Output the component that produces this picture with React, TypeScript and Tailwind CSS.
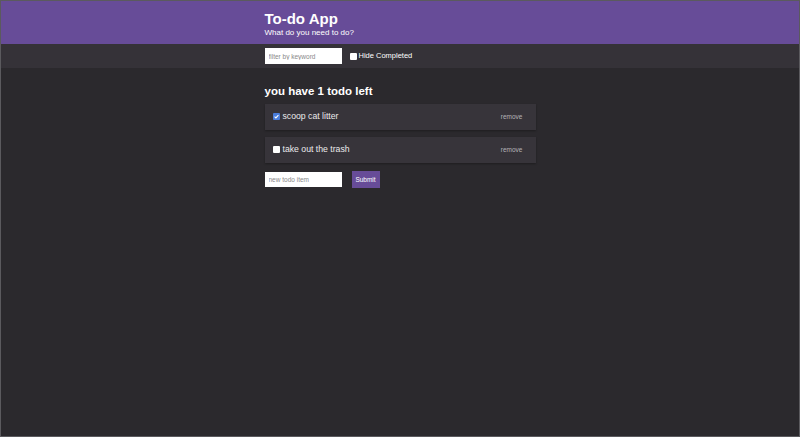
import { useState } from 'react';

type Todo = { id: number; text: string; done: boolean };

function Box({ checked, onChange }: { checked: boolean; onChange?: () => void }) {
  return (
    <span className="relative inline-flex size-[7px] shrink-0">
      <input
        type="checkbox"
        checked={checked}
        onChange={onChange}
        className="m-0 size-[7px] appearance-none rounded-[1px] bg-white checked:bg-[#4a7ddb]"
      />
      {checked && (
        <svg viewBox="0 0 8 8" className="pointer-events-none absolute inset-0 size-[7px]">
          <path d="M1.8 4.2 3.3 5.6 6.2 2.4" fill="none" stroke="white" strokeWidth="1.2" />
        </svg>
      )}
    </span>
  );
}

export default function App() {
  const [hide, setHide] = useState(false);
  const [todos, setTodos] = useState<Todo[]>([
    { id: 1, text: 'scoop cat litter', done: true },
    { id: 2, text: 'take out the trash', done: false },
  ]);
  const left = todos.filter((t) => !t.done).length;
  const shown = hide ? todos.filter((t) => !t.done) : todos;

  return (
    <div className="flex h-[437px] flex-col border border-[#5b5a5e] bg-[#2b292d] text-white" style={{ fontFamily: '"Liberation Sans", Arial, sans-serif' }}>
      <header className="h-[43px] bg-[#674c98]">
        <div className="mx-auto w-[271px] pt-[9px]">
          <h1 className="text-[15px] font-bold leading-[18px]">To-do App</h1>
          <p className="text-[8px] leading-[10px]">What do you need to do?</p>
        </div>
      </header>
      <div className="h-[24px] bg-[#353238]">
        <div className="mx-auto flex w-[271px] items-center gap-[8px] pt-[4px]">
          <input placeholder="filter by keyword" className="h-[16px] w-[77px] bg-white px-[4px] text-[6.5px] text-black outline-none placeholder:text-[#888]" />
          <label className="flex items-center gap-[2px] text-[7.5px]">
            <Box checked={hide} onChange={() => setHide(!hide)} />
            Hide Completed
          </label>
        </div>
      </div>
      <main className="mx-auto w-[271px] pt-[16px]">
        <h2 className="text-[11.5px] font-bold leading-[14px]">you have {left} todo left</h2>
        <ul className="mt-[6px] flex flex-col gap-[7px]">
          {shown.map((t) => (
            <li key={t.id} className="flex h-[26px] items-center justify-between bg-[#37343a] pl-[8px] pr-[13px] shadow-[0_1px_2px_rgba(0,0,0,0.3)]">
              <label className="flex items-center gap-[3px] text-[8.7px] text-[#ebeaec]">
                <Box checked={t.done} onChange={() => setTodos(todos.map((x) => (x.id === t.id ? { ...x, done: !x.done } : x)))} />
                {t.text}
              </label>
              <button className="text-[6.5px] text-[#b5b3b8]" onClick={() => setTodos(todos.filter((x) => x.id !== t.id))}>remove</button>
            </li>
          ))}
        </ul>
        <form className="mt-[8px] flex items-center gap-[10px]" onSubmit={(e) => e.preventDefault()}>
          <input placeholder="new todo item" className="h-[15px] w-[77px] bg-white px-[4px] text-[6.5px] text-black outline-none placeholder:text-[#888]" />
          <button className="h-[17px] w-[28px] bg-[#674c98] text-[6.5px] text-white">Submit</button>
        </form>
      </main>
    </div>
  );
}
